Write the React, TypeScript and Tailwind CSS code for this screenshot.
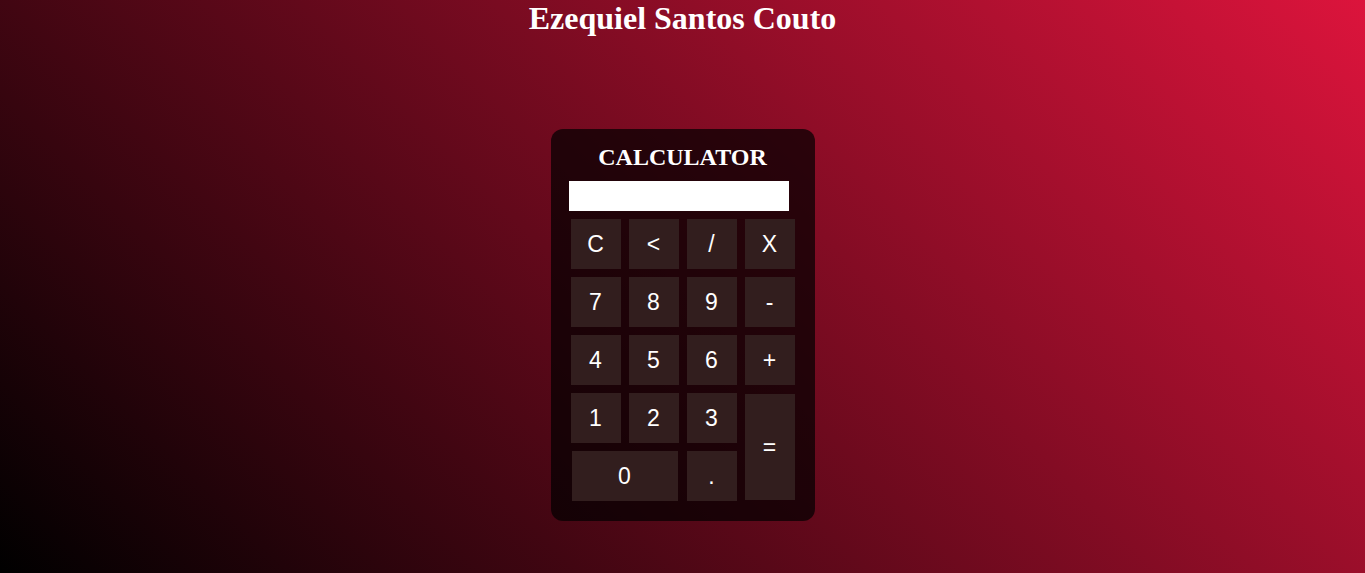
import React from "react";

const btn =
  "flex items-center justify-center bg-[#321e1e] text-white text-[23px] font-['Liberation_Sans',Arial,sans-serif] leading-none";

export default function App() {
  return (
    <div className="min-h-[573px] w-full bg-[linear-gradient(45deg,#000000,#dc143c)] flex flex-col items-center">
      <h1 className="m-0 text-[32px] font-bold leading-[37px] text-white font-['Liberation_Serif','Times_New_Roman',serif]">
        Ezequiel Santos Couto
      </h1>
      <div className="mt-[92px] w-[264px] h-[392px] rounded-[12px] bg-black/70 pt-[14px] flex flex-col">
        <h2 className="m-0 text-center text-[24px] font-bold leading-[28px] text-white font-['Liberation_Serif','Times_New_Roman',serif]">
          CALCULATOR
        </h2>
        <div className="ml-[18px] mt-[10px] w-[220px] h-[30px] bg-white" />
        <div className="ml-[20px] mt-[8px] grid grid-cols-[repeat(4,50px)] grid-rows-[repeat(5,50px)] gap-[8px]">
          <div className={btn}>C</div>
          <div className={btn}>&lt;</div>
          <div className={btn}>/</div>
          <div className={btn}>X</div>
          <div className={btn}>7</div>
          <div className={btn}>8</div>
          <div className={btn}>9</div>
          <div className={btn}>-</div>
          <div className={btn}>4</div>
          <div className={btn}>5</div>
          <div className={btn}>6</div>
          <div className={btn}>+</div>
          <div className={btn}>1</div>
          <div className={btn}>2</div>
          <div className={btn}>3</div>
          <div className={`${btn} row-span-2 my-[1px]`}>=</div>
          <div className={`${btn} col-span-2 mx-[1px]`}>0</div>
          <div className={btn}>.</div>
        </div>
      </div>
    </div>
  );
}
